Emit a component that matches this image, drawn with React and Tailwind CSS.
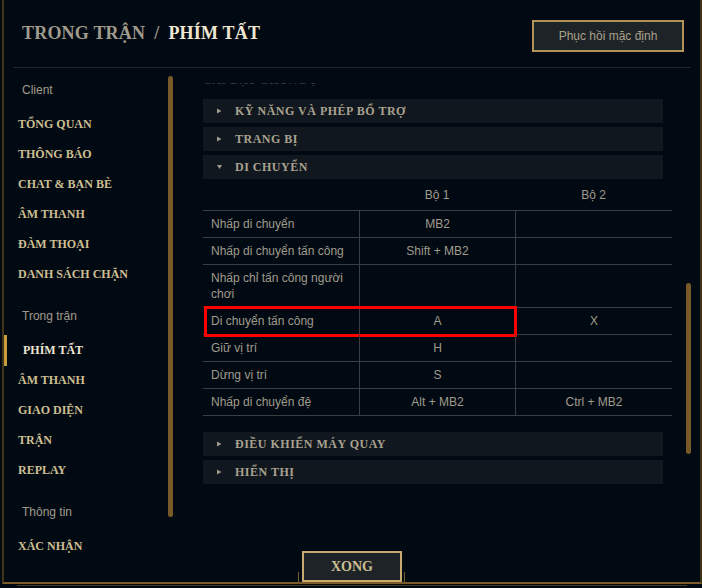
import React from "react";

const serif = "font-['Liberation_Serif',serif]";
const sans = "font-['Liberation_Sans',Arial,sans-serif]";

const groups = [
  { label: "Client", items: ["TỔNG QUAN", "THÔNG BÁO", "CHAT & BẠN BÈ", "ÂM THANH", "ĐÀM THOẠI", "DANH SÁCH CHẶN"] },
  { label: "Trong trận", items: ["PHÍM TẤT", "ÂM THANH", "GIAO DIỆN", "TRẬN", "REPLAY"] },
  { label: "Thông tin", items: ["XÁC NHẬN"] },
];

const rows = [
  { name: "Nhấp di chuyển", a: "MB2", b: "" },
  { name: "Nhấp di chuyển tấn công", a: "Shift + MB2", b: "" },
  { name: "Nhấp chỉ tấn công người chơi", a: "", b: "", tall: true },
  { name: "Di chuyển tấn công", a: "A", b: "X", marked: true },
  { name: "Giữ vị trí", a: "H", b: "" },
  { name: "Dừng vị trí", a: "S", b: "" },
  { name: "Nhấp di chuyển đệ", a: "Alt + MB2", b: "Ctrl + MB2" },
];

function Arrow({ open }) {
  return (
    <svg width="5" height="6" viewBox="0 0 5 6" className="shrink-0">
      {open ? <polygon points="0,1 5,1 2.5,5" fill="#a09b8c" /> : <polygon points="0,0.5 4.5,3 0,5.5" fill="#a09b8c" />}
    </svg>
  );
}

function Section({ title, open }) {
  return (
    <div className="flex h-[24px] w-[460px] items-center bg-[#11171e] pl-[14px]">
      <Arrow open={open} />
      <span className={`ml-[13px] ${serif} text-[12px] font-bold tracking-[0.5px] text-[#a8a290]`}>{title}</span>
    </div>
  );
}

export default function App() {
  return (
    <div className="h-[588px] w-[702px] overflow-hidden bg-[#010a13] pl-[2px]">
      <div className="flex h-[584px] w-[700px] flex-col border-x-2 border-b-2 border-x-[#3f3318] border-b-[#7a5c2a]">
        {/* header */}
        <div className="flex h-[67px] items-center justify-between pl-[18px] pr-[16px]">
          <div className={`${serif} text-[18px] font-bold tracking-[0.2px]`}>
            <span className="text-[#a09b8c]">TRONG TRẬN</span>
            <span className="mx-[9px] text-[#a09b8c]">/</span>
            <span className="text-[#f0e6d2]">PHÍM TẤT</span>
          </div>
          <button className={`mt-[5px] h-[32px] w-[152px] border-2 border-[#b1935a] bg-[#1e2328] ${sans} text-[12px] text-[#a9a18a]`}>
            Phục hồi mặc định
          </button>
        </div>
        <div className="mx-[9px] h-px bg-[#1e252d]" />

        <div className="flex flex-1">
          {/* sidebar */}
          <div className="flex w-[171px]">
            <div className="flex-1 pt-[10px]">
              {groups.map((g, gi) => (
                <div key={g.label} className={gi > 0 ? "mt-[15px]" : ""}>
                  <div className={`flex h-[24px] items-center pl-[18px] ${sans} text-[12px] text-[#a09b8c]`}>{g.label}</div>
                  <div className="mt-[7px]">
                    {g.items.map((it) =>
                      it === "PHÍM TẤT" ? (
                        <div key={it} className="flex h-[30px] items-center">
                          <div className="h-[31px] w-[3px] bg-[#c89b3c]" />
                          <span className={`ml-[16px] ${serif} text-[12px] font-bold text-[#f0e6d2]`}>{it}</span>
                        </div>
                      ) : (
                        <div key={it + gi} className={`flex h-[30px] items-center pl-[14px] ${serif} text-[12px] font-bold text-[#cdbe91]`}>
                          {it}
                        </div>
                      )
                    )}
                  </div>
                </div>
              ))}
            </div>
            <div className="mt-[8px] h-[441px] w-[5px] rounded-full bg-[#785a28]" />
            <div className="w-[2px]" />
          </div>

          {/* content */}
          <div className="flex flex-1 flex-col">
            <div className="flex flex-1">
              <div className="w-[497px] pl-[28px] pt-[15px]">
                <div className="h-[3px] overflow-hidden">
                  <div className={`-mt-[12px] ${serif} text-[12px] font-bold tracking-[0.5px] text-[#3a3b3c]`}>CÀI ĐẶT CHUNG Ị</div>
                </div>
                <div className="mt-[13px] flex flex-col gap-[4px]">
                  <Section title="KỸ NĂNG VÀ PHÉP BỔ TRỢ" />
                  <Section title="TRANG BỊ" />
                  <Section title="DI CHUYỂN" open />
                </div>

                <div className={`w-[469px] ${sans} text-[12px] text-[#a09b8c]`}>
                  <div className="grid h-[32px] grid-cols-[156px_156px_157px] items-center border-b border-[#3a3d42] text-center">
                    <span />
                    <span>Bộ 1</span>
                    <span>Bộ 2</span>
                  </div>
                  {rows.map((r) => (
                    <div
                      key={r.name}
                      className={`relative grid grid-cols-[156px_156px_157px] border-b border-[#3a3d42] ${r.tall ? "h-[43px]" : "h-[27px]"}`}
                    >
                      <div className="flex items-center pl-[8px] pr-[8px] leading-[16px]">{r.name}</div>
                      <div className="flex items-center justify-center border-l border-[#3a3d42]">{r.a}</div>
                      <div className="flex items-center justify-center border-l border-[#3a3d42]">{r.b}</div>
                      {r.marked && <div className="absolute left-[1px] -top-[2px] h-[31px] w-[313px] border-[3px] border-[#ff0000]" />}
                    </div>
                  ))}
                </div>

                <div className="mt-[16px] flex flex-col gap-[4px]">
                  <Section title="ĐIỀU KHIỂN MÁY QUAY" />
                  <Section title="HIỂN THỊ" />
                </div>
              </div>
              <div className="ml-[14px] mt-[215px] h-[171px] w-[5px] rounded-full bg-[#785a28]" />
            </div>

            {/* footer */}
            <div className="flex h-[31px] items-end pl-[123px]">
              <div className="h-[10px] w-px bg-[#7a5c2a]" />
              <button className={`ml-[3px] h-[31px] w-[100px] border-2 border-[#c8aa6e] bg-[#1e2328] ${serif} text-[14px] font-bold text-[#cdbe91]`}>
                XONG
              </button>
              <div className="ml-[2px] h-[10px] w-px bg-[#7a5c2a]" />
            </div>
          </div>
        </div>
      </div>
      <div className="ml-[15px] mt-[1px] h-px w-[670px] bg-[#4a3a1a]" />
    </div>
  );
}
